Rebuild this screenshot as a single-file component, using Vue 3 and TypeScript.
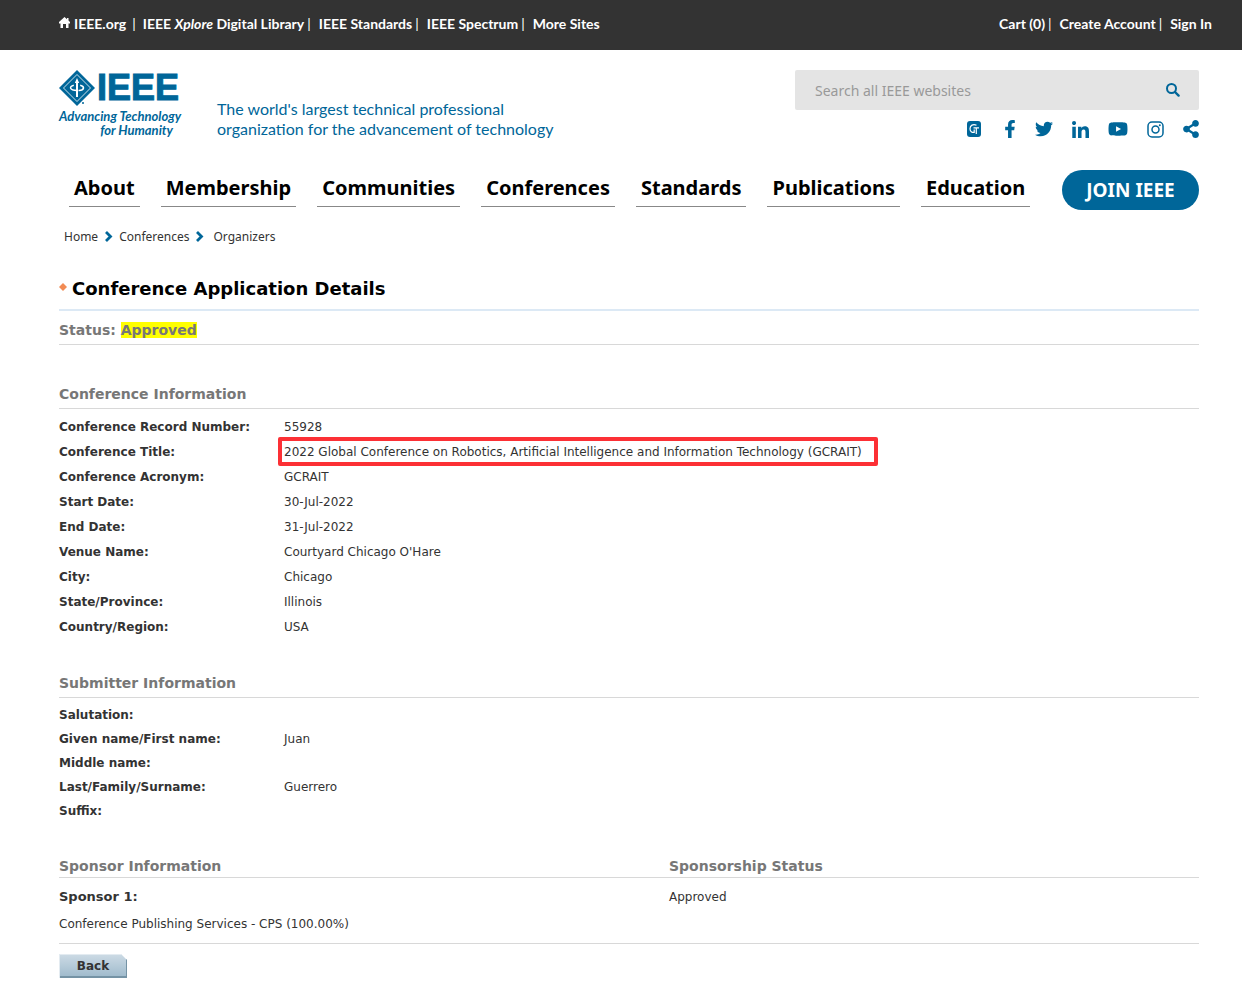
<script setup lang="ts">
interface Social {
  name: string
  box: string
  width: number
  height: number
  path: string
}

interface Field {
  label: string
  value: string
  marked?: boolean
}

const navItems: string[] = [
  'About', 'Membership', 'Communities', 'Conferences', 'Standards', 'Publications', 'Education',
]

const socials: Social[] = [
  {
    name: 'Facebook', box: '0 0 320 512', width: 12, height: 18,
    path: 'M279.14 288l14.22-92.66h-88.91v-60.13c0-25.35 12.42-50.06 52.24-50.06h40.42V6.26S260.43 0 225.36 0c-73.22 0-121.08 44.38-121.08 124.72v70.62H22.89V288h81.39v224h100.17V288z',
  },
  {
    name: 'Twitter', box: '0 0 512 512', width: 18, height: 18,
    path: 'M459.37 151.716c.325 4.548.325 9.097.325 13.645 0 138.72-105.583 298.558-298.558 298.558-59.452 0-114.68-17.219-161.137-47.106 8.447.974 16.568 1.299 25.34 1.299 49.055 0 94.213-16.568 130.274-44.832-46.132-.975-84.792-31.188-98.112-72.772 6.498.974 12.995 1.624 19.818 1.624 9.421 0 18.843-1.3 27.614-3.573-48.081-9.747-84.143-51.98-84.143-102.985v-1.299c13.969 7.797 30.214 12.67 47.431 13.319-28.264-18.843-46.781-51.005-46.781-87.391 0-19.492 5.197-37.36 14.294-52.954 51.655 63.675 129.3 105.258 216.365 109.807-1.624-7.797-2.599-15.918-2.599-24.04 0-57.828 46.782-104.934 104.934-104.934 30.213 0 57.502 12.67 76.67 33.137 23.715-4.548 46.456-13.32 66.599-25.34-7.798 24.366-24.366 44.833-46.132 57.827 21.117-2.273 41.584-8.122 60.426-16.243-14.292 20.791-32.161 39.308-52.628 54.253z',
  },
  {
    name: 'LinkedIn', box: '0 0 448 448', width: 17, height: 17,
    path: 'M100.28 448H7.4V148.9h92.88zM53.79 108.1C24.09 108.1 0 83.5 0 53.8a53.79 53.79 0 0 1 107.58 0c0 29.7-24.1 54.3-53.79 54.3zM447.9 448h-92.68V302.4c0-34.7-.7-79.2-48.29-79.2-48.29 0-55.69 37.7-55.69 76.7V448h-92.78V148.9h89.08v40.8h1.3c12.4-23.5 42.69-48.3 87.88-48.3 94 0 111.28 61.9 111.28 142.3V448z',
  },
  {
    name: 'YouTube', box: '0 0 576 512', width: 20, height: 18,
    path: 'M549.655 124.083c-6.281-23.65-24.787-42.276-48.284-48.597C458.781 64 288 64 288 64S117.22 64 74.629 75.486c-23.497 6.322-42.003 24.947-48.284 48.597-11.412 42.867-11.412 132.305-11.412 132.305s0 89.438 11.412 132.305c6.281 23.65 24.787 41.5 48.284 47.821C117.22 448 288 448 288 448s170.78 0 213.371-11.486c23.497-6.321 42.003-24.171 48.284-47.821 11.412-42.867 11.412-132.305 11.412-132.305s0-89.438-11.412-132.305zm-317.51 213.508V175.185l142.739 81.205-142.739 81.201z',
  },
]

const sharePath =
  'M352 320c-22.608 0-43.387 7.819-59.79 20.895l-102.486-64.054a96.551 96.551 0 0 0 0-41.683l102.486-64.054C308.613 184.181 329.392 192 352 192c53.019 0 96-42.981 96-96S405.019 0 352 0s-96 42.981-96 96c0 7.158.79 14.13 2.276 20.841L155.79 180.895C139.387 167.819 118.608 160 96 160c-53.019 0-96 42.981-96 96s42.981 96 96 96c22.608 0 43.387-7.819 59.79-20.895l102.486 64.054A96.301 96.301 0 0 0 256 416c0 53.019 42.981 96 96 96s96-42.981 96-96-42.981-96-96-96z'

const conference: Field[] = [
  { label: 'Conference Record Number:', value: '55928' },
  {
    label: 'Conference Title:',
    value: '2022 Global Conference on Robotics, Artificial Intelligence and Information Technology (GCRAIT)',
    marked: true,
  },
  { label: 'Conference Acronym:', value: 'GCRAIT' },
  { label: 'Start Date:', value: '30-Jul-2022' },
  { label: 'End Date:', value: '31-Jul-2022' },
  { label: 'Venue Name:', value: "Courtyard Chicago O'Hare" },
  { label: 'City:', value: 'Chicago' },
  { label: 'State/Province:', value: 'Illinois' },
  { label: 'Country/Region:', value: 'USA' },
]

const submitter: Field[] = [
  { label: 'Salutation:', value: '' },
  { label: 'Given name/First name:', value: 'Juan' },
  { label: 'Middle name:', value: '' },
  { label: 'Last/Family/Surname:', value: 'Guerrero' },
  { label: 'Suffix:', value: '' },
]
</script>

<template>
  <div class="page">
    <nav class="topbar" aria-label="IEEE sites">
      <div class="links">
        <a href="#" class="home">
          <svg width="11" height="12" viewBox="0 0 11 12" aria-hidden="true">
            <path d="M5.500 0 0 5v1.500h1.500V11H4V7h3v4h2.500V6.500H11V5L9.500 3.600V1H8v1.300z" fill="currentColor" />
          </svg>
          IEEE.org
        </a>
        <span class="bar wide">|</span>
        <a href="#">IEEE <i>Xplore</i> Digital Library</a>
        <span class="bar">|</span>
        <a href="#">IEEE Standards</a>
        <span class="bar">|</span>
        <a href="#">IEEE Spectrum</a>
        <span class="bar">|</span>
        <a href="#">More Sites</a>
      </div>
      <div class="links">
        <a href="#">Cart (0)</a>
        <span class="bar">|</span>
        <a href="#">Create Account</a>
        <span class="bar">|</span>
        <a href="#">Sign In</a>
      </div>
    </nav>

    <header class="header">
      <a href="#" class="logo">
        <span class="brand">
          <svg width="36" height="36" viewBox="0 0 36 36" aria-hidden="true">
            <path d="M18 0 36 18 18 36 0 18z" fill="#006699" />
            <path d="M18 4.500 31.500 18 18 31.500 4.500 18z" fill="none" stroke="#fff" stroke-width=".8" />
            <path d="M18 8l2.200 5h-1.200V27h-2V13h-1.200z" fill="#fff" />
            <path d="M14.800 15.200c-5 1.300-4.500 5 3.200 5.300h1.500M21.200 15.200c5 1.300 4 5.100-1.200 5.300" fill="none" stroke="#fff" stroke-width="1.500" />
            <circle cx="24" cy="33" r="1" fill="#006699" />
          </svg>
          <span>IEEE</span>
        </span>
        <span class="motto">Advancing Technology</span>
        <span class="motto second">for Humanity</span>
      </a>
      <p class="tagline">The world's largest technical professional<br>organization for the advancement of technology</p>
      <div class="tools">
        <form class="search" role="search" @submit.prevent>
          <input type="search" placeholder="Search all IEEE websites" aria-label="Search all IEEE websites">
          <button type="submit" aria-label="Search">
            <svg width="14" height="14" viewBox="0 0 14 14" aria-hidden="true">
              <circle cx="5.500" cy="5.500" r="4.500" fill="none" stroke="currentColor" stroke-width="2" />
              <path d="M9 9l3.600 3.600" stroke="currentColor" stroke-width="2.400" stroke-linecap="round" />
            </svg>
          </button>
        </form>
        <div class="social">
          <a href="#" class="collabratec" aria-label="Collabratec">
            <svg width="14" height="16" viewBox="0 0 14 16">
              <rect width="14" height="16" rx="3" fill="currentColor" />
              <path d="M9.500 4.200C6 2.500 3 4.500 3 7.800c0 2.500 2 4 4.200 3.600V8.600M6.500 6.800h5.500M9.300 6.800V13" fill="none" stroke="#fff" stroke-width="1.200" />
            </svg>
          </a>
          <a v-for="s in socials" :key="s.name" href="#" :aria-label="s.name">
            <svg :width="s.width" :height="s.height" :viewBox="s.box"><path :d="s.path" fill="currentColor" /></svg>
          </a>
          <a href="#" aria-label="Instagram">
            <svg width="17" height="17" viewBox="0 0 17 17">
              <rect x="1" y="1" width="15" height="15" rx="4" fill="none" stroke="currentColor" stroke-width="1.500" />
              <circle cx="8.500" cy="8.500" r="3.500" fill="none" stroke="currentColor" stroke-width="1.500" />
              <circle cx="12.800" cy="4.200" r="1" fill="currentColor" />
            </svg>
          </a>
          <a href="#" aria-label="Share">
            <svg width="16" height="18" viewBox="0 0 448 512"><path :d="sharePath" fill="currentColor" /></svg>
          </a>
        </div>
      </div>
    </header>

    <nav class="mainnav" aria-label="Main">
      <a v-for="item in navItems" :key="item" href="#" class="item">{{ item }}</a>
      <a href="#" class="join">JOIN IEEE</a>
    </nav>

    <nav class="crumbs" aria-label="Breadcrumb">
      <a href="#">Home</a>
      <svg width="9" height="11" viewBox="0 0 9 11" aria-hidden="true"><path d="M2 1l4.500 4.500L2 10" fill="none" stroke="#006699" stroke-width="2.800" /></svg>
      <a href="#">Conferences</a>
      <svg width="9" height="11" viewBox="0 0 9 11" aria-hidden="true"><path d="M2 1l4.500 4.500L2 10" fill="none" stroke="#006699" stroke-width="2.800" /></svg>
      <a href="#" class="last">Organizers</a>
    </nav>

    <main class="content">
      <h1>
        <svg width="8" height="11" viewBox="0 0 8 11" aria-hidden="true"><path d="M4 0l4 4-4 4-4-4z" fill="#f28b54" /></svg>
        Conference Application Details
      </h1>
      <h2 class="status">Status: <mark>Approved</mark></h2>

      <h2>Conference Information</h2>
      <table class="fields">
        <tbody>
          <tr v-for="f in conference" :key="f.label">
            <th scope="row">{{ f.label }}</th>
            <td><span :class="{ marked: f.marked }">{{ f.value }}</span></td>
          </tr>
        </tbody>
      </table>

      <h2 class="next">Submitter Information</h2>
      <table class="fields tight">
        <tbody>
          <tr v-for="f in submitter" :key="f.label">
            <th scope="row">{{ f.label }}</th>
            <td>{{ f.value }}</td>
          </tr>
        </tbody>
      </table>

      <table class="sponsors">
        <thead>
          <tr>
            <th scope="col">Sponsor Information</th>
            <th scope="col">Sponsorship Status</th>
          </tr>
        </thead>
        <tbody>
          <tr class="first">
            <td><strong>Sponsor 1:</strong></td>
            <td>Approved</td>
          </tr>
          <tr class="second">
            <td colspan="2">Conference Publishing Services - CPS (100.00%)</td>
          </tr>
        </tbody>
      </table>
      <button type="button" class="back">Back</button>
    </main>
  </div>
</template>

<style>
body {
  margin: 0;
  background: #fff;
}
</style>

<style scoped>
.page {
  color: #333;
  font: 12px/16px "DejaVu Sans", Verdana, sans-serif;
}

a {
  color: inherit;
  text-decoration: none;
}

svg {
  display: block;
  flex: none;
}

.topbar {
  display: flex;
  justify-content: space-between;
  align-items: center;
  height: 50px;
  box-sizing: border-box;
  padding: 0 30px 2px 59px;
  background: #333;
  color: #fff;
  font: bold 14px/20px Lato, "Open Sans", sans-serif;
  white-space: nowrap;
}

.links {
  display: flex;
}

.home {
  display: flex;
  gap: 4px;
}

.home svg {
  margin-top: 3px;
}

.bar {
  margin: 0 8px 0 3px;
  font-weight: normal;
}

.bar.wide {
  margin: 0 7px 0 6px;
}

.header {
  display: flex;
  align-items: flex-start;
  padding: 20px 43px 0 59px;
}

.logo {
  display: flex;
  flex-direction: column;
  width: 121px;
  color: #006699;
}

.brand {
  display: flex;
  align-items: center;
  gap: 2px;
  height: 36px;
  font: bold 36px/36px "Liberation Sans", Arial, sans-serif;
  -webkit-text-stroke: 1px #006699;
}

.motto {
  font: italic bold 13px/14px Lato, "Open Sans", sans-serif;
  white-space: nowrap;
  margin-top: 3px;
}

.motto.second {
  margin: 0 7px 0 0;
  text-align: right;
}

.tagline {
  margin: 29px 0 0 37px;
  color: #006699;
  font: 16px/20px Lato, "Open Sans", sans-serif;
}

.tools {
  width: 404px;
  margin-left: auto;
}

.search {
  display: flex;
  height: 40px;
  border-radius: 2px;
  background: #e4e4e4;
}

.search input {
  flex: 1;
  min-width: 0;
  padding: 2px 20px 0;
  border: 0;
  outline: 0;
  background: none;
  color: #333;
  font: 14px/20px "Noto Sans", sans-serif;
}

.search input::placeholder {
  color: #999;
}

.search button {
  padding: 0 19px;
  border: 0;
  background: none;
  color: #006699;
}

.social {
  display: flex;
  justify-content: flex-end;
  align-items: center;
  gap: 19px;
  height: 38px;
  color: #006699;
}

.collabratec {
  padding-right: 4px;
}

.mainnav {
  display: flex;
  align-items: flex-start;
  gap: 21px;
  padding: 22px 43px 0 69px;
  font: bold 20px/36px "Noto Sans", sans-serif;
  color: #000;
}

.item {
  padding: 0 5px;
  border-bottom: 1px solid #888;
}

.join {
  box-sizing: border-box;
  width: 137px;
  margin-left: auto;
  border-radius: 20px;
  background: #006699;
  color: #fff;
  font-size: 19px;
  line-height: 40px;
  text-align: center;
}

.crumbs {
  display: flex;
  align-items: center;
  gap: 6px;
  padding: 17px 43px 0 64px;
  font: 12px/20px "Noto Sans", sans-serif;
}

.crumbs svg {
  margin-bottom: 2px;
}

.crumbs .last {
  margin-left: 3px;
}

.content {
  padding: 0 43px 24px 59px;
}

h1 {
  display: flex;
  align-items: center;
  gap: 5px;
  margin: 30px 0 0;
  padding-bottom: 9px;
  border-bottom: 2px solid #dce9f5;
  color: #000;
  font-size: 18px;
  line-height: 23px;
}

h2 {
  margin: 40px 0 5px;
  padding-bottom: 4px;
  border-bottom: 1px solid #d8d8d8;
  color: #777;
  font-size: 14px;
  line-height: 19px;
}

h2.status {
  margin: 10px 0 0;
}

h2.next {
  margin-top: 35px;
}

mark {
  background: #ff0;
  color: inherit;
}

table {
  width: 100%;
  border-collapse: collapse;
}

th,
td {
  padding: 0;
  text-align: left;
}

.fields th {
  width: 225px;
}

.fields tr {
  height: 25px;
}

.fields.tight tr {
  height: 24px;
}

.marked {
  position: relative;
}

.marked::after {
  content: "";
  position: absolute;
  inset: -8px -16px -7px -6px;
  border: 4px solid #fc3035;
  border-radius: 2px;
}

.sponsors {
  margin-top: 34px;
  border-bottom: 1px solid #d8d8d8;
}

.sponsors thead th {
  padding-bottom: 1px;
  border-bottom: 1px solid #d8d8d8;
  color: #777;
  font-size: 14px;
  line-height: 19px;
}

.sponsors thead th:last-child {
  width: 530px;
}

.sponsors strong {
  font-size: 13px;
}

.first td {
  padding-top: 8px;
  height: 22px;
}

.second td {
  padding: 8px 0 11px;
}

.back {
  display: block;
  width: 68px;
  height: 24px;
  margin-top: 10px;
  padding: 0;
  border: 0;
  background: linear-gradient(#cddbe5, #9db9cb);
  box-shadow: inset 1px 1px #e3ebf1, inset -1px -2px #7593a5;
  clip-path: polygon(0 0, 62px 0, 100% 6px, 100% 100%, 0 100%);
  color: #333;
  font: bold 12px/24px "DejaVu Sans", Verdana, sans-serif;
}
</style>
